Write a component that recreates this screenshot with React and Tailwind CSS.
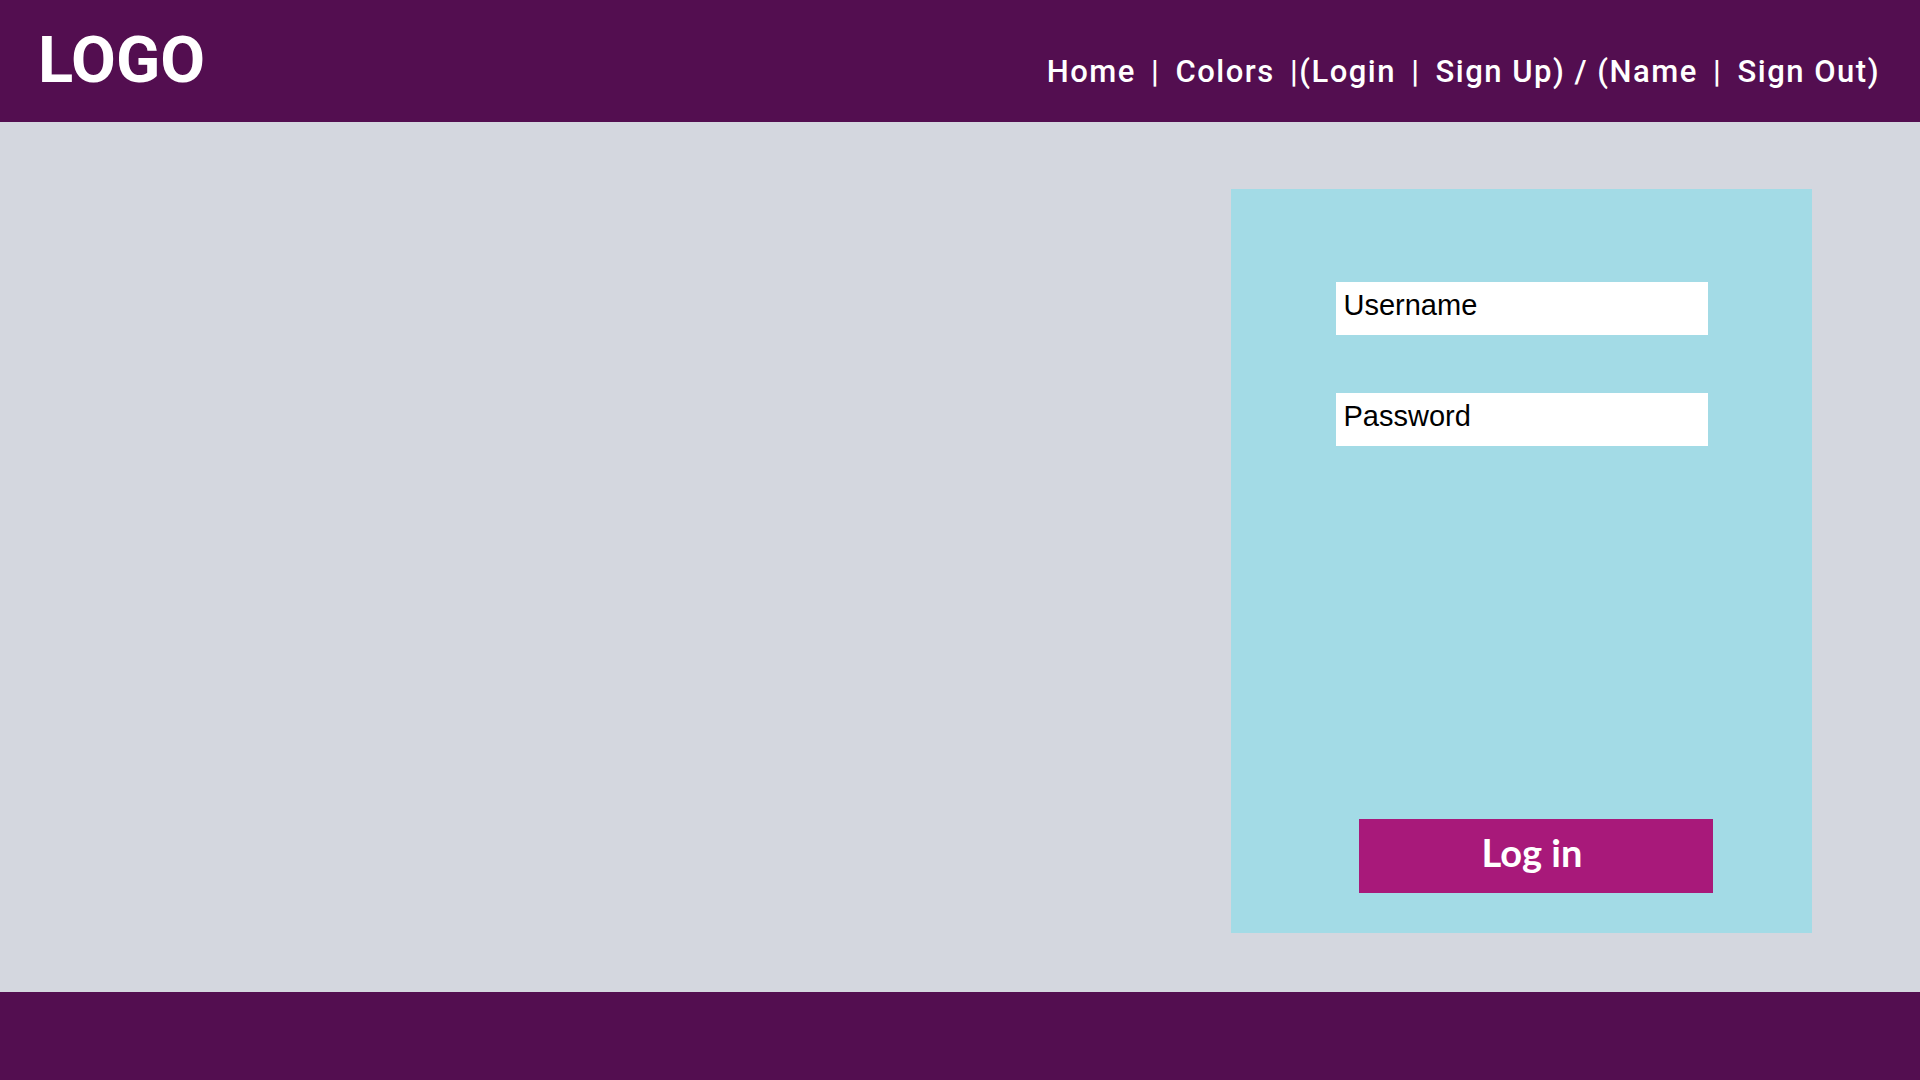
function Pipe({ left = true, right = true }) {
  return <span className={(left ? "ml-[6px] " : "") + (right ? "mr-[6px]" : "")}>|</span>;
}

export default function App() {
  return (
    <div className="w-[1920px] h-[1080px] flex flex-col bg-[#d4d7df] overflow-hidden">
      <header className="h-[122px] shrink-0 bg-[#530e50] pl-[38px] pr-[40px] pt-[28px] flex items-baseline justify-between">
        <div className="text-white text-[65px] leading-none font-bold font-['Roboto',sans-serif]">LOGO</div>
        <nav className="text-white text-[31px] leading-none font-medium tracking-[1.5px] font-['Roboto',sans-serif] whitespace-pre">
          {"Home "}<Pipe />{" Colors "}<Pipe right={false} />{"(Login "}<Pipe />{" Sign Up) / (Name "}<Pipe />{" Sign Out)"}
        </nav>
      </header>
      <main className="flex-1 flex justify-end pr-[108px] pt-[67px]">
        <div className="w-[581px] h-[744px] bg-[#a3dbe6] flex flex-col pt-[93px] pb-[40px]">
          <div className="mx-auto w-[372px] h-[53px] bg-white flex items-center pl-[8px] pb-[6px] text-black text-[29px] font-['Liberation_Sans',sans-serif]">
            Username
          </div>
          <div className="mx-auto mt-[58px] w-[372px] h-[53px] bg-white flex items-center pl-[8px] pb-[6px] text-black text-[29px] font-['Liberation_Sans',sans-serif]">
            Password
          </div>
          <div className="mt-auto ml-[128px] w-[354px] h-[74px] bg-[#a8197a] flex items-center justify-center pb-[8px] pr-[8px] text-white text-[38px] font-bold font-['Lato',sans-serif]">
            Log in
          </div>
        </div>
      </main>
      <footer className="h-[88px] shrink-0 bg-[#530e50]" />
    </div>
  );
}
